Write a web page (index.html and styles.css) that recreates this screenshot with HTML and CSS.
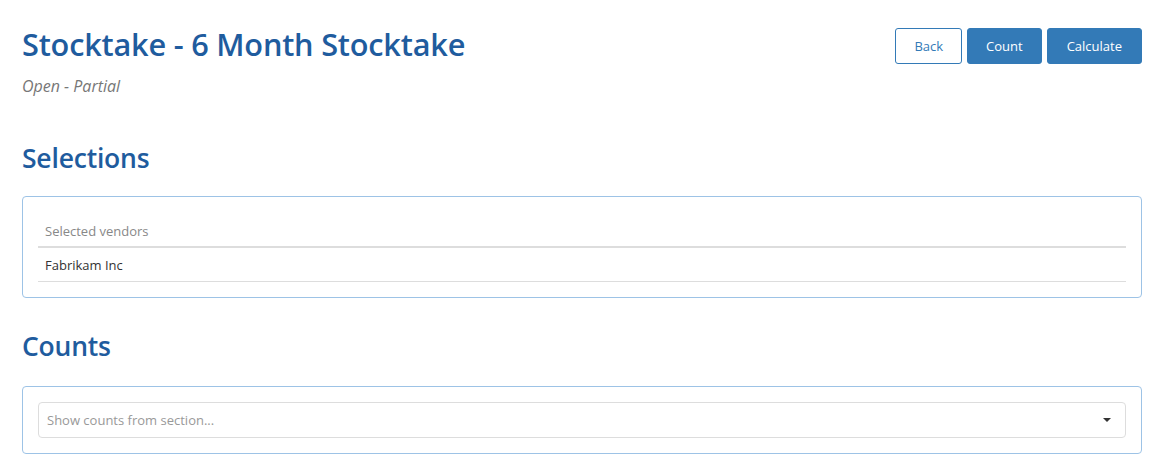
FILE: index.html
```html
<!DOCTYPE html>
<html lang="en">
<head>
  <meta charset="UTF-8">
  <meta name="viewport" content="width=device-width, initial-scale=1.0">
  <title>Stocktake - 6 Month Stocktake</title>
  <link rel="stylesheet" href="styles.css">
</head>
<body>
  <div class="page">
    <div class="page-header">
      <div class="title-block">
        <h1>Stocktake - 6 Month Stocktake</h1>
        <p class="status">Open - Partial</p>
      </div>
      <div class="actions">
        <button class="btn btn-outline">Back</button>
        <button class="btn btn-primary">Count</button>
        <button class="btn btn-primary btn-wide">Calculate</button>
      </div>
    </div>

    <h2>Selections</h2>
    <div class="panel">
      <table class="grid">
        <thead>
          <tr><th>Selected vendors</th></tr>
        </thead>
        <tbody>
          <tr><td>Fabrikam Inc</td></tr>
        </tbody>
      </table>
    </div>

    <h2>Counts</h2>
    <div class="panel panel-counts">
      <div class="select">
        <span class="placeholder">Show counts from section...</span>
        <span class="caret"></span>
      </div>
    </div>
  </div>
</body>
</html>
```

FILE: styles.css
```css
body {
  margin: 0;
  font-family: "Open Sans", "Noto Sans", sans-serif;
  color: #333;
  background: #fff;
}

.page {
  padding: 0 17px 0 22px;
}

.page-header {
  display: flex;
  justify-content: space-between;
  align-items: flex-start;
  margin-bottom: 41px;
}

h1 {
  margin: 21px 0 0;
  font-size: 30.7px;
  font-weight: 600;
  line-height: 46px;
  color: #1f5c9e;
  letter-spacing: -0.2px;
}

.status {
  margin: 8px 0 0;
  font-size: 16px;
  font-style: italic;
  color: #777;
  line-height: 22px;
}

.actions {
  display: flex;
  gap: 5px;
  margin-top: 28px;
}

.btn {
  height: 36px;
  padding: 0 18px;
  font-family: inherit;
  font-size: 13px;
  border-radius: 3px;
  border: 1px solid #337ab7;
  cursor: pointer;
}

.btn-wide {
  padding: 0 19px;
}

.btn-outline {
  background: #fff;
  color: #337ab7;
}

.btn-primary {
  background: #337ab7;
  color: #fff;
}

h2 {
  margin: 28px 0 0;
  font-size: 26.5px;
  font-weight: 600;
  line-height: 40px;
  color: #1f5c9e;
  letter-spacing: -0.2px;
}

.panel {
  margin-top: 18px;
  border: 1px solid #9dc3e6;
  border-radius: 4px;
  padding: 15px;
}

.panel-counts {
  margin-top: 20px;
}

.grid {
  width: 100%;
  border-collapse: collapse;
  font-size: 13px;
  margin-top: 2px;
}

.grid th {
  text-align: left;
  font-weight: normal;
  color: #888;
  padding: 8px 7px 6px;
  border-bottom: 2px solid #ddd;
}

.grid td {
  color: #333;
  padding: 8px 7px 7px;
  border-bottom: 1px solid #ddd;
}

.select {
  display: flex;
  align-items: center;
  justify-content: space-between;
  height: 34px;
  border: 1px solid #ddd;
  border-radius: 4px;
  padding: 0 14px 0 8px;
}

.placeholder {
  font-size: 13px;
  color: #999;
}

.caret {
  width: 0;
  height: 0;
  border-left: 4px solid transparent;
  border-right: 4px solid transparent;
  border-top: 4px solid #333;
}
```
